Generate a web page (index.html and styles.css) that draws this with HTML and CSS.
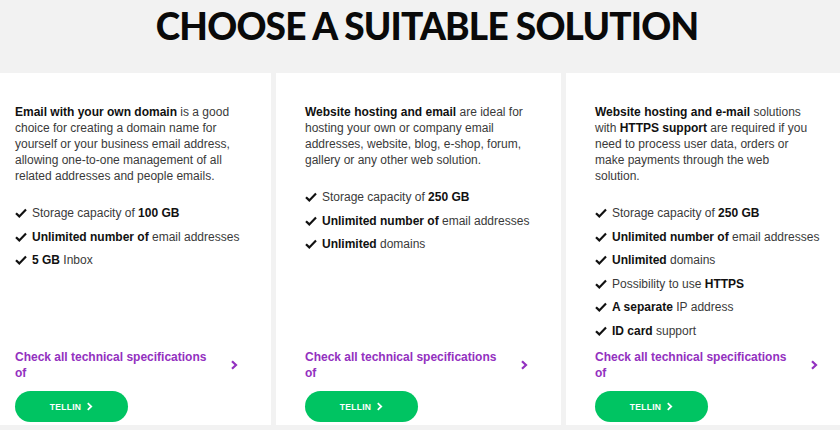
FILE: index.html
```html
<!DOCTYPE html>
<html lang="en">
<head>
  <meta charset="UTF-8" />
  <meta name="viewport" content="width=device-width, initial-scale=1.0" />
  <title>Choose a suitable solution</title>
  <link rel="stylesheet" href="styles.css">
</head>
<body>
  <div class="page-header">
    <h1>CHOOSE A SUITABLE SOLUTION</h1>
  </div>

  <div class="plans">
    <div class="plan">
      <p class="plan-intro"><strong>Email with your own domain</strong> is a good choice for creating a domain name for yourself or your business email address, allowing one-to-one management of all related addresses and people emails.</p>
      <ul class="features">
        <li><svg class="check" viewBox="0 0 12 10"><path d="M1 5.2l3.3 3.2L11 1.6" /></svg><span>Storage capacity of <b>100 GB</b></span></li>
        <li><svg class="check" viewBox="0 0 12 10"><path d="M1 5.2l3.3 3.2L11 1.6" /></svg><span><b>Unlimited number of</b> email addresses</span></li>
        <li><svg class="check" viewBox="0 0 12 10"><path d="M1 5.2l3.3 3.2L11 1.6" /></svg><span><b>5 GB</b> Inbox</span></li>
      </ul>
      <a class="spec-link" href="#">
        <span>Check all technical specifications of</span>
        <svg class="chevron" viewBox="0 0 8 10"><path d="M2 1.2l4 3.8-4 3.8" /></svg>
      </a>
      <a class="order-button" href="#">TELLIN <svg viewBox="0 0 8 10"><path d="M2 1.2l4 3.8-4 3.8" /></svg></a>
    </div>

    <div class="plan">
      <p class="plan-intro"><strong>Website hosting and email</strong> are ideal for hosting your own or company email addresses, website, blog, e-shop, forum, gallery or any other web solution.</p>
      <ul class="features">
        <li><svg class="check" viewBox="0 0 12 10"><path d="M1 5.2l3.3 3.2L11 1.6" /></svg><span>Storage capacity of <b>250 GB</b></span></li>
        <li><svg class="check" viewBox="0 0 12 10"><path d="M1 5.2l3.3 3.2L11 1.6" /></svg><span><b>Unlimited number of</b> email addresses</span></li>
        <li><svg class="check" viewBox="0 0 12 10"><path d="M1 5.2l3.3 3.2L11 1.6" /></svg><span><b>Unlimited</b> domains</span></li>
      </ul>
      <a class="spec-link" href="#">
        <span>Check all technical specifications of</span>
        <svg class="chevron" viewBox="0 0 8 10"><path d="M2 1.2l4 3.8-4 3.8" /></svg>
      </a>
      <a class="order-button" href="#">TELLIN <svg viewBox="0 0 8 10"><path d="M2 1.2l4 3.8-4 3.8" /></svg></a>
    </div>

    <div class="plan">
      <p class="plan-intro"><strong>Website hosting and e-mail</strong> solutions with <strong>HTTPS support</strong> are required if you need to process user data, orders or make payments through the web solution.</p>
      <ul class="features">
        <li><svg class="check" viewBox="0 0 12 10"><path d="M1 5.2l3.3 3.2L11 1.6" /></svg><span>Storage capacity of <b>250 GB</b></span></li>
        <li><svg class="check" viewBox="0 0 12 10"><path d="M1 5.2l3.3 3.2L11 1.6" /></svg><span><b>Unlimited number of</b> email addresses</span></li>
        <li><svg class="check" viewBox="0 0 12 10"><path d="M1 5.2l3.3 3.2L11 1.6" /></svg><span><b>Unlimited</b> domains</span></li>
        <li><svg class="check" viewBox="0 0 12 10"><path d="M1 5.2l3.3 3.2L11 1.6" /></svg><span>Possibility to use <b>HTTPS</b></span></li>
        <li><svg class="check" viewBox="0 0 12 10"><path d="M1 5.2l3.3 3.2L11 1.6" /></svg><span><b>A separate</b> IP address</span></li>
        <li><svg class="check" viewBox="0 0 12 10"><path d="M1 5.2l3.3 3.2L11 1.6" /></svg><span><b>ID card</b> support</span></li>
      </ul>
      <a class="spec-link" href="#">
        <span>Check all technical specifications of</span>
        <svg class="chevron" viewBox="0 0 8 10"><path d="M2 1.2l4 3.8-4 3.8" /></svg>
      </a>
      <a class="order-button" href="#">TELLIN <svg viewBox="0 0 8 10"><path d="M2 1.2l4 3.8-4 3.8" /></svg></a>
    </div>
  </div>
</body>
</html>
```

FILE: styles.css
```css
* { box-sizing: border-box; margin: 0; padding: 0; }
body {
  font-family: 'Liberation Sans', Arial, sans-serif;
  background: #f2f2f2;
  color: #333;
  width: 840px;
  height: 430px;
  overflow: hidden;
}
.page-header {
  height: 73px;
  display: flex;
  justify-content: center;
  padding: 4px 0 0 14px;
}
.page-header h1 {
  font-family: 'Lato', sans-serif;
  font-weight: 900;
  font-size: 37px;
  line-height: 44px;
  color: #0a0a0a;
  letter-spacing: -0.8px;
}
.plans {
  display: flex;
  gap: 5px;
  margin-left: -14px;
}
.plan {
  flex: 0 0 285px;
  height: 352px;
  background: white;
  padding: 31px 29px 3px;
  display: flex;
  flex-direction: column;
}
.plan-intro {
  max-width: 220px;
  font-size: 12px;
  line-height: 16px;
  color: #3a3a3a;
}
.plan-intro strong,
.features b {
  color: #111;
}
.features {
  list-style: none;
  margin-top: 21px;
}
.features li {
  display: flex;
  align-items: center;
  font-size: 12px;
  line-height: 16px;
  margin-bottom: 7.5px;
  color: #3a3a3a;
}
.check {
  width: 12px;
  height: 10px;
  margin-right: 5px;
  flex-shrink: 0;
  fill: none;
  stroke: #111;
  stroke-width: 2.2;
}
.spec-link {
  margin-top: auto;
  display: flex;
  align-items: center;
  justify-content: space-between;
  color: #9330c0;
  font-weight: bold;
  font-size: 12px;
  line-height: 16px;
  text-decoration: none;
}
.spec-link span {
  max-width: 198px;
}
.chevron {
  width: 8px;
  height: 10px;
  margin-right: 4px;
  fill: none;
  stroke: #9330c0;
  stroke-width: 2.2;
}
.order-button {
  margin-top: 10px;
  width: 113px;
  height: 31px;
  border-radius: 16px;
  background-color: #00c462;
  color: white;
  font-size: 8.5px;
  font-weight: bold;
  letter-spacing: 0.3px;
  text-decoration: none;
  display: flex;
  align-items: center;
  justify-content: center;
  gap: 5px;
}
.order-button svg {
  width: 7px;
  height: 9px;
  fill: none;
  stroke: white;
  stroke-width: 2;
}
```
